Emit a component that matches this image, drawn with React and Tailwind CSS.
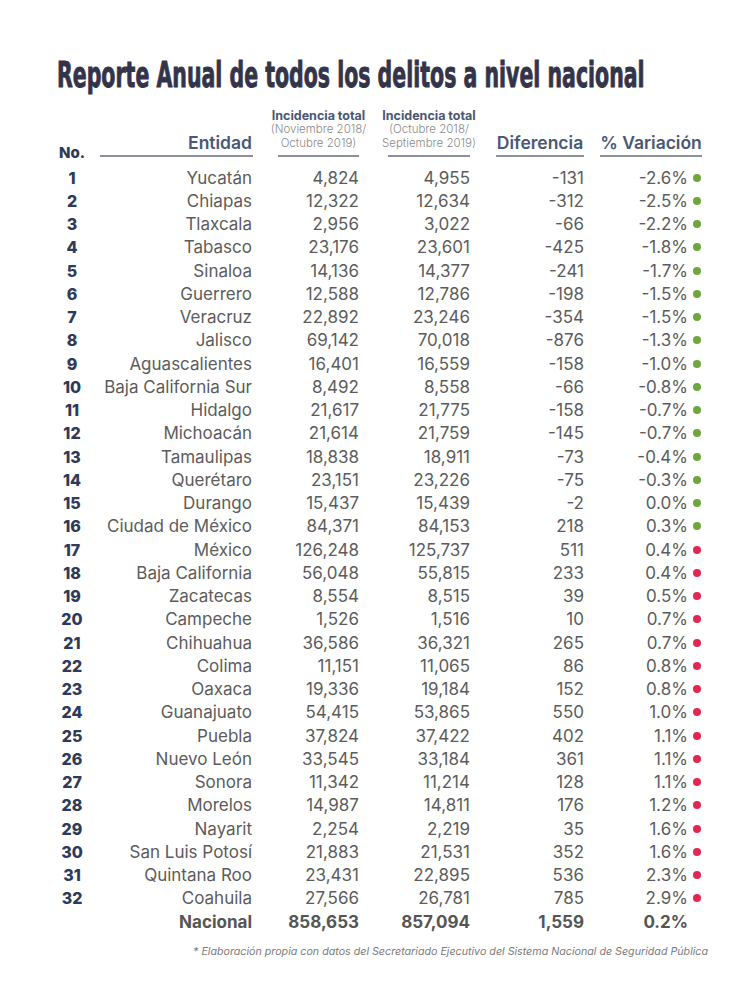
import React from "react";

const rows = [
  [1, "Yucatán", "4,824", "4,955", "-131", "-2.6%", "g"],
  [2, "Chiapas", "12,322", "12,634", "-312", "-2.5%", "g"],
  [3, "Tlaxcala", "2,956", "3,022", "-66", "-2.2%", "g"],
  [4, "Tabasco", "23,176", "23,601", "-425", "-1.8%", "g"],
  [5, "Sinaloa", "14,136", "14,377", "-241", "-1.7%", "g"],
  [6, "Guerrero", "12,588", "12,786", "-198", "-1.5%", "g"],
  [7, "Veracruz", "22,892", "23,246", "-354", "-1.5%", "g"],
  [8, "Jalisco", "69,142", "70,018", "-876", "-1.3%", "g"],
  [9, "Aguascalientes", "16,401", "16,559", "-158", "-1.0%", "g"],
  [10, "Baja California Sur", "8,492", "8,558", "-66", "-0.8%", "g"],
  [11, "Hidalgo", "21,617", "21,775", "-158", "-0.7%", "g"],
  [12, "Michoacán", "21,614", "21,759", "-145", "-0.7%", "g"],
  [13, "Tamaulipas", "18,838", "18,911", "-73", "-0.4%", "g"],
  [14, "Querétaro", "23,151", "23,226", "-75", "-0.3%", "g"],
  [15, "Durango", "15,437", "15,439", "-2", "0.0%", "g"],
  [16, "Ciudad de México", "84,371", "84,153", "218", "0.3%", "g"],
  [17, "México", "126,248", "125,737", "511", "0.4%", "r"],
  [18, "Baja California", "56,048", "55,815", "233", "0.4%", "r"],
  [19, "Zacatecas", "8,554", "8,515", "39", "0.5%", "r"],
  [20, "Campeche", "1,526", "1,516", "10", "0.7%", "r"],
  [21, "Chihuahua", "36,586", "36,321", "265", "0.7%", "r"],
  [22, "Colima", "11,151", "11,065", "86", "0.8%", "r"],
  [23, "Oaxaca", "19,336", "19,184", "152", "0.8%", "r"],
  [24, "Guanajuato", "54,415", "53,865", "550", "1.0%", "r"],
  [25, "Puebla", "37,824", "37,422", "402", "1.1%", "r"],
  [26, "Nuevo León", "33,545", "33,184", "361", "1.1%", "r"],
  [27, "Sonora", "11,342", "11,214", "128", "1.1%", "r"],
  [28, "Morelos", "14,987", "14,811", "176", "1.2%", "r"],
  [29, "Nayarit", "2,254", "2,219", "35", "1.6%", "r"],
  [30, "San Luis Potosí", "21,883", "21,531", "352", "1.6%", "r"],
  [31, "Quintana Roo", "23,431", "22,895", "536", "2.3%", "r"],
  [32, "Coahuila", "27,566", "26,781", "785", "2.9%", "r"],
];

function Line() {
  return <div className="h-[2px] w-full bg-[#8d919c]" />;
}

function Row({ r }) {
  const [n, name, a, b, d, p, c] = r;
  return (
    <div className="flex h-[23.26px] items-center text-[17px] leading-[20px] text-[#5c5c5c]">
      <div className="w-[40px] text-center text-[16px] font-extrabold text-[#2e3a5a]">{n}</div>
      <div className="ml-[8px] w-[153px] text-right pr-[1px] whitespace-nowrap">{name}</div>
      <div className="ml-[25px] w-[81px] text-right">{a}</div>
      <div className="ml-[29px] w-[82px] text-right">{b}</div>
      <div className="ml-[26px] w-[88px] text-right">{d}</div>
      <div className="ml-[16px] w-[102px] flex items-center justify-end">
        <span>{p}</span>
        <span
          className={
            "ml-[5px] mr-[1px] inline-block h-[8px] w-[8px] rounded-full " +
            (c === "g" ? "bg-[#6fa640]" : "bg-[#e3284f]")
          }
        />
      </div>
    </div>
  );
}

export default function App() {
  return (
    <div
      className="min-h-[992px] w-[756px] overflow-hidden bg-white"
      style={{ fontFamily: "Inter, 'Liberation Sans', sans-serif" }}
    >
      <div className="pt-[55px] pl-[57px] h-[95px] whitespace-nowrap overflow-hidden">
        <span
          className="inline-block origin-left scale-x-[0.633] text-[36px] leading-[40px] font-bold text-[#33344a] [-webkit-text-stroke:0.9px_#33344a]"
          style={{ fontFamily: "'Liberation Sans Narrow', 'DejaVu Sans Condensed', 'Liberation Sans', sans-serif" }}
        >
          Reporte Anual de todos los delitos a nivel nacional
        </span>
      </div>

      <div className="pl-[52px]">
        <div className="flex items-end h-[62px]">
          <div className="w-[40px] text-center text-[15px] leading-[18px] font-extrabold text-[#2e3a5a] -mb-[5px]">
            No.
          </div>
          <div className="ml-[8px] w-[153px] flex flex-col items-end">
            <div className="text-[17.5px] leading-[20px] font-semibold text-[#4a5777] pr-[1px]">Entidad</div>
            <div className="mt-[2px] w-full"><Line /></div>
          </div>
          <div className="ml-[25px] w-[81px] flex flex-col items-center">
            <div className="whitespace-nowrap text-center text-[12.5px] leading-[14px] font-bold text-[#4a5777]">Incidencia total</div>
            <div className="whitespace-nowrap text-center text-[11.5px] leading-[13.5px] font-light text-[#8a8a8a]">(Noviembre 2018/</div>
            <div className="whitespace-nowrap text-center text-[11.5px] leading-[13.5px] font-light text-[#8a8a8a]">Octubre 2019)</div>
            <div className="mt-[5px] w-full"><Line /></div>
          </div>
          <div className="ml-[29px] w-[82px] flex flex-col items-center">
            <div className="whitespace-nowrap text-center text-[12.5px] leading-[14px] font-bold text-[#4a5777]">Incidencia total</div>
            <div className="whitespace-nowrap text-center text-[11.5px] leading-[13.5px] font-light text-[#8a8a8a]">(Octubre 2018/</div>
            <div className="whitespace-nowrap text-center text-[11.5px] leading-[13.5px] font-light text-[#8a8a8a]">Septiembre 2019)</div>
            <div className="mt-[5px] w-full"><Line /></div>
          </div>
          <div className="ml-[26px] w-[88px] flex flex-col items-center">
            <div className="whitespace-nowrap text-[17.5px] leading-[20px] font-semibold text-[#4a5777]">Diferencia</div>
            <div className="mt-[2px] w-full"><Line /></div>
          </div>
          <div className="ml-[16px] w-[102px] flex flex-col items-center">
            <div className="whitespace-nowrap text-[17.5px] leading-[20px] font-semibold text-[#4a5777]">% Variación</div>
            <div className="mt-[2px] w-full"><Line /></div>
          </div>
        </div>

        <div className="mt-[9px]">
          {rows.map((r) => (
            <Row key={r[0]} r={r} />
          ))}
          <div className="flex h-[23.26px] items-center text-[17px] leading-[20px] font-bold text-[#555555]">
            <div className="w-[40px]" />
            <div className="ml-[8px] w-[153px] text-right pr-[1px]">Nacional</div>
            <div className="ml-[25px] w-[81px] text-right">858,653</div>
            <div className="ml-[29px] w-[82px] text-right">857,094</div>
            <div className="ml-[26px] w-[88px] text-right">1,559</div>
            <div className="ml-[16px] w-[102px] flex items-center justify-end">
              <span>0.2%</span>
              <span className="ml-[5px] mr-[1px] inline-block h-[8px] w-[8px]" />
            </div>
          </div>
        </div>
      </div>

      <div className="mt-[12px] pr-[48px] text-right text-[10.7px] leading-[14px] italic text-[#7a7a7a]">
        * Elaboración propia con datos del Secretariado Ejecutivo del Sistema Nacional de Seguridad Pública
      </div>
    </div>
  );
}
